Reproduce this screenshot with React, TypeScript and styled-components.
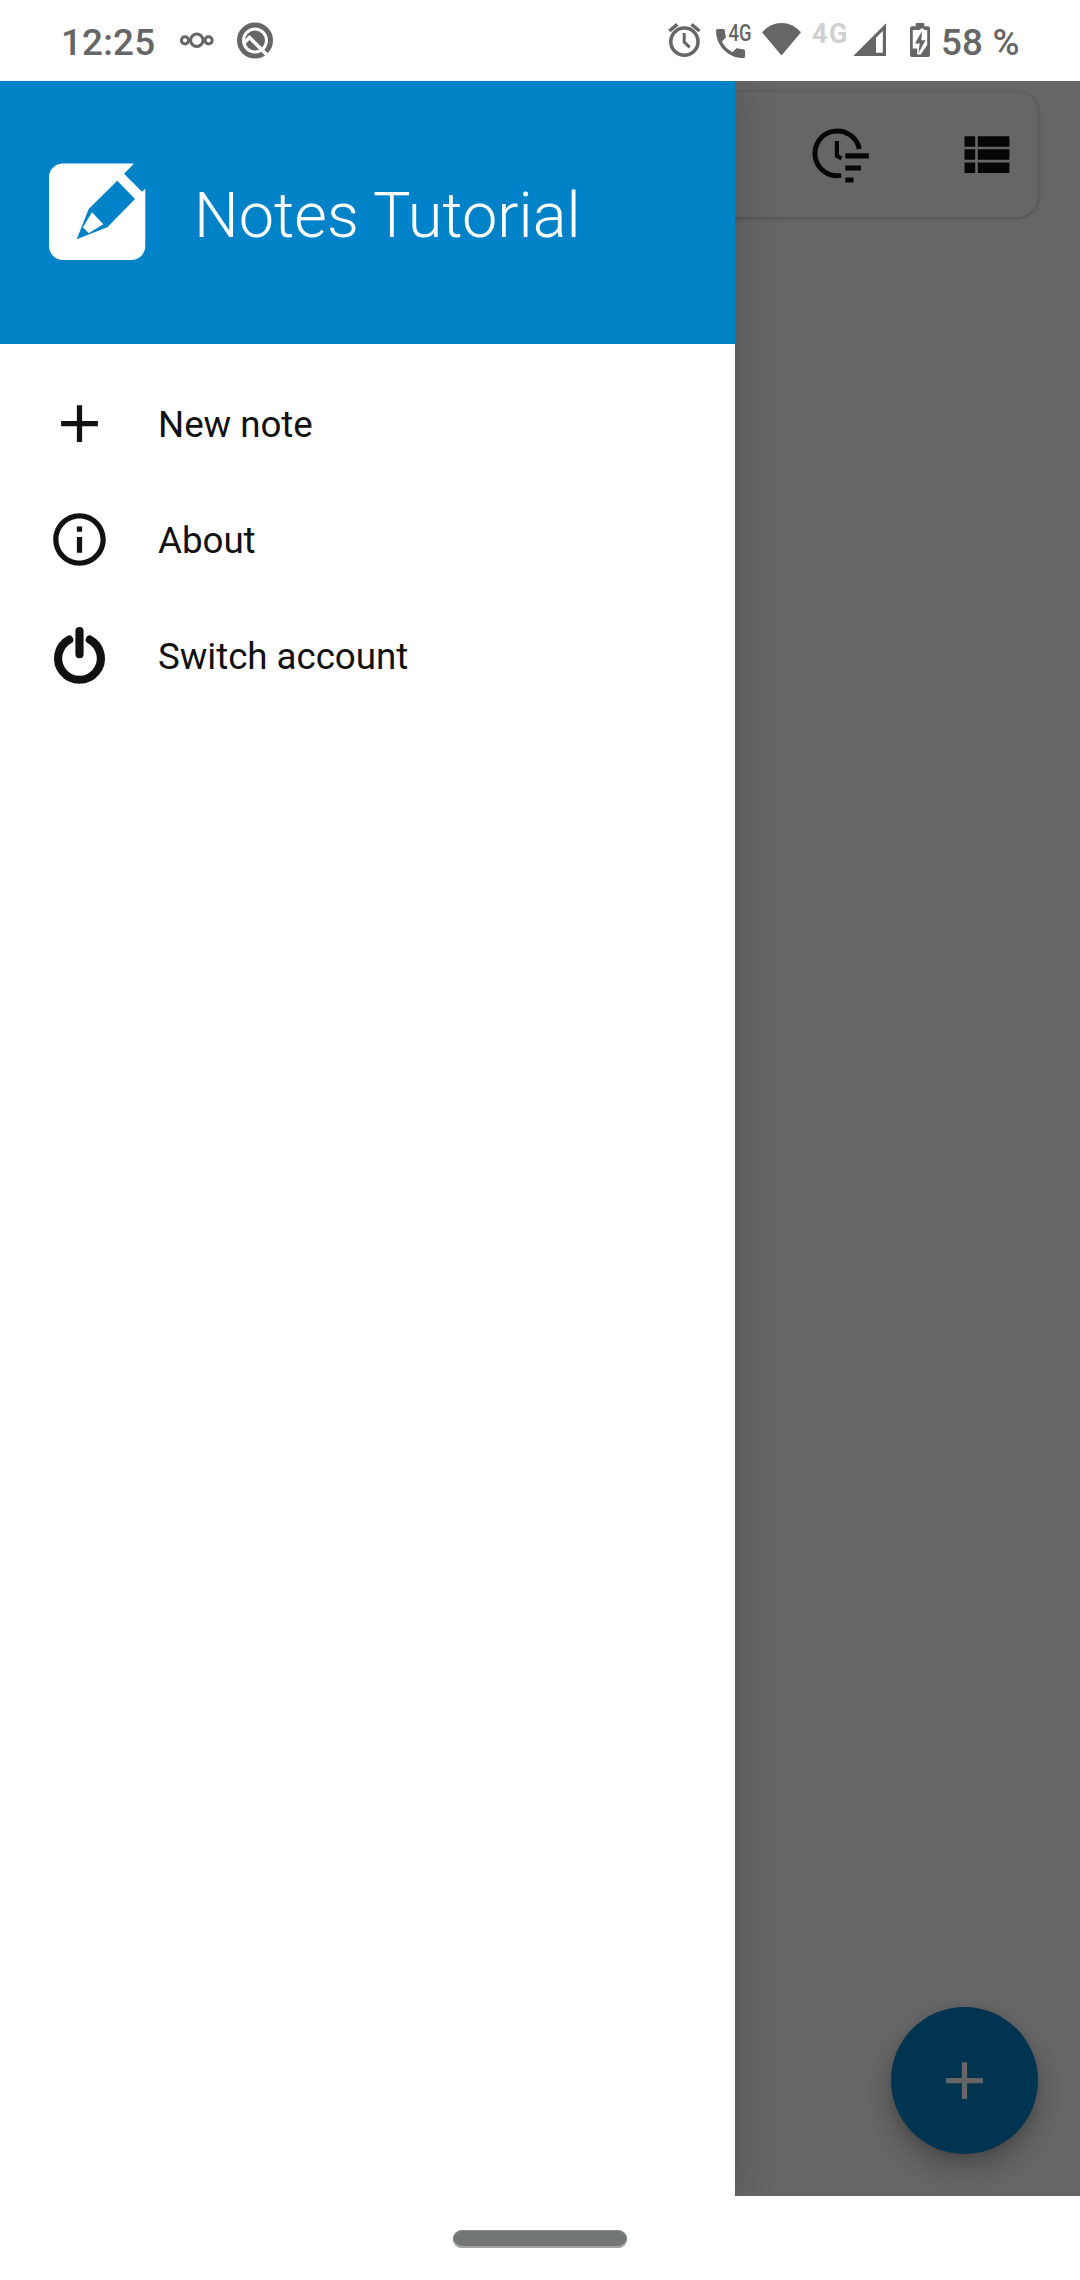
import React from "react";
import styled, { createGlobalStyle } from "styled-components";

const GlobalStyle = createGlobalStyle`
  body { margin: 0; background: #fff; font-family: Roboto, "Liberation Sans", sans-serif; }
`;

const Screen = styled.div`
  width: 1080px;
  height: 2280px;
  display: flex;
  flex-direction: column;
  background: #fff;
  overflow: hidden;
`;

const StatusBar = styled.header`
  height: 81px;
  flex: none;
  display: flex;
  color: #666;
  fill: #666;
`;

const StatusText = styled.span<{ $width: number; $before?: number }>`
  width: ${(p) => p.$width}px;
  margin-left: ${(p) => p.$before ?? 0}px;
  font-size: 36.75px;
  font-weight: 500;
  line-height: 85px;
  letter-spacing: 0.2px;
  white-space: nowrap;
`;

const StatusIcon = styled.svg<{ $before?: number }>`
  display: block;
  flex: none;
  overflow: visible;
  margin-left: ${(p) => p.$before ?? 0}px;
`;

const NetworkLabel = styled.span`
  width: 38px;
  margin-left: 10px;
  font-size: 27px;
  font-weight: 700;
  letter-spacing: 1.5px;
  line-height: 68px;
  color: #d0d0d0;
`;

const Stage = styled.main`
  height: 2115px;
  flex: none;
  display: grid;
  grid-template-columns: 735px 345px;
  overflow: hidden;
`;

const Page = styled.section`
  grid-area: 1 / 1 / 2 / 3;
  display: flex;
  flex-direction: column;
  justify-content: space-between;
  align-items: flex-end;
  padding: 11px 42px 42px;
  box-sizing: border-box;
  background: #fff;
`;

const SearchCard = styled.div`
  width: 996px;
  height: 125px;
  box-sizing: border-box;
  padding-right: 20px;
  border-radius: 21px;
  display: flex;
  gap: 83px;
  justify-content: flex-end;
  align-items: center;
  background: #fff;
  box-shadow: 0 1px 5px rgba(0, 0, 0, 0.26);
`;

const ToolButton = styled.button`
  width: 63px;
  height: 125px;
  padding: 0;
  border: 0;
  background: none;
  display: flex;
  justify-content: center;
`;

const Fab = styled.button`
  width: 147px;
  height: 147px;
  padding: 0;
  border: 0;
  border-radius: 50%;
  display: flex;
  align-items: center;
  justify-content: center;
  background: #0082c9;
  box-shadow: 0 14px 28px rgba(0, 0, 0, 0.27), 0 2px 10px rgba(0, 0, 0, 0.1);
`;

const Scrim = styled.div`
  grid-area: 1 / 1 / 2 / 3;
  z-index: 1;
  background: rgba(0, 0, 0, 0.6);
`;

const Drawer = styled.nav`
  grid-area: 1 / 1 / 2 / 2;
  z-index: 2;
  background: #fff;
  box-shadow: 0 0 40px rgba(0, 0, 0, 0.2);
`;

const DrawerHeader = styled.div`
  height: 263px;
  box-sizing: border-box;
  padding: 82px 0 0 48px;
  display: flex;
  background: #0082c9;
`;

const Title = styled.h1`
  margin: 16px 0 0 48px;
  font-size: 63px;
  font-weight: 300;
  line-height: 74px;
  white-space: nowrap;
  color: #fff;
`;

const Menu = styled.ul`
  list-style: none;
  margin: 0;
  padding: 21px 0 0;
`;

const MenuItem = styled.li`
  height: 116px;
  padding-left: 48px;
  display: flex;
  align-items: center;
`;

const MenuLabel = styled.span`
  margin: 3px 0 0 47px;
  font-size: 36.75px;
  line-height: 44px;
  letter-spacing: -0.06px;
  color: #111;
`;

const NavBar = styled.footer`
  height: 84px;
  flex: none;
  display: flex;
  justify-content: center;
  padding-top: 34px;
  box-sizing: border-box;
`;

const HomeHandle = styled.div`
  width: 174px;
  height: 18px;
  border-radius: 9px;
  background: #727676;
  box-shadow: inset 0 -2px 0 #a3a5a5, inset 0 1px 0 #8a8e8e;
`;

const PlusIcon = ({ color }: { color: string }) => (
  <svg width="63" height="63" viewBox="0 0 24 24" fill={color}>
    <path d="M19 13h-6v6h-2v-6H5v-2h6V5h2v6h6v2z" />
  </svg>
);

const InfoIcon = () => (
  <svg width="63" height="63" viewBox="0 0 24 24" fill="#111">
    <path d="M11 7h2v2h-2zm0 4h2v6h-2zm1-9C6.48 2 2 6.48 2 12s4.48 10 10 10 10-4.48 10-10S17.52 2 12 2zm0 18c-4.41 0-8-3.59-8-8s3.59-8 8-8 8 3.59 8 8-3.59 8-8 8z" />
  </svg>
);

const PowerIcon = () => (
  <svg width="63" height="63" viewBox="48 624 63 63" fill="none" stroke="#111" strokeWidth="8.2" strokeLinecap="round">
    <path d="M79.5 631.2v23M69.2 639.6a21.4 21.4 0 1 0 20.6 0" />
  </svg>
);

const NotesLogo = () => (
  <svg width="98" height="98" viewBox="48 163 98 98">
    <path
      fill="#fff"
      d="M63 163.5H134L124 173.7L142 191.7L145.3 188.7V246a14 14 0 0 1-14 14H63a14 14 0 0 1-14-14V177.5a14 14 0 0 1 14-14z"
    />
    <path fill="#0082c9" d="M117.3 180.7L135 199L107.3 227.3L76.7 239.3L88.7 209z" />
    <path fill="#fff" d="M92 212.3L103.3 224.3L88.7 233.3L83 227.3z" />
  </svg>
);

const App = () => (
  <>
    <GlobalStyle />
    <Screen>
      <StatusBar>
        <StatusText $width={100} $before={61}>12:25</StatusText>
        <StatusIcon $before={17} width="40" height="81" viewBox="178 0 40 81">
          <g fill="none" stroke="#666" strokeWidth="3">
            <circle cx="196.8" cy="40.3" r="6.2" />
            <circle cx="185" cy="40.3" r="3.6" />
            <circle cx="208.6" cy="40.3" r="3.6" />
          </g>
        </StatusIcon>
        <StatusIcon $before={16} width="42" height="81" viewBox="234 0 42 81">
          <circle cx="255" cy="40.5" r="15.5" fill="none" stroke="#666" strokeWidth="5" />
          <circle cx="255" cy="40.5" r="10" />
          <path d="M243.5 43.5L249.5 37.5L270 58" fill="none" stroke="#fff" strokeWidth="3.6" />
        </StatusIcon>
        <StatusIcon $before={390} width="38" height="81" viewBox="666 0 38 81">
          <g fill="none" stroke="#666">
            <circle cx="684.4" cy="41.7" r="13.6" strokeWidth="3.5" />
            <path d="M684.2 33v9l5.500 5.300" strokeWidth="3" />
            <path d="M669.3 31l8-6.600M699.500 31l-8-6.600" strokeWidth="3.4" />
          </g>
        </StatusIcon>
        <StatusIcon $before={10} width="46" height="81" viewBox="714 0 46 81">
          <path
            transform="translate(711.2 24.2) scale(1.61)"
            d="M6.62 10.79c1.44 2.83 3.76 5.14 6.59 6.59l2.2-2.2c.27-.27.67-.36 1.02-.24 1.12.37 2.33.57 3.57.57.55 0 1 .45 1 1V20c0 .55-.45 1-1 1-9.39 0-17-7.61-17-17 0-.55.45-1 1-1h3.500c.55 0 1 .45 1 1 0 1.25.2 2.45.57 3.57.11.35.03.74-.25 1.02l-2.200 2.200z"
          />
          <text x="728.6" y="40.5" fontSize="23" fontWeight="500" textLength="23" lengthAdjust="spacingAndGlyphs">4G</text>
        </StatusIcon>
        <StatusIcon $before={1} width="41" height="81" viewBox="761 0 41 81">
          <path d="M762 32.200Q770.500 23 781.500 23T801 32.200L781.500 55.500z" />
        </StatusIcon>
        <NetworkLabel>4G</NetworkLabel>
        <StatusIcon $before={2} width="36" height="81" viewBox="852 0 36 81">
          <path fillRule="evenodd" d="M853.300 56L886 23.300V56zM876 37.800V52.800H882.800V31z" />
        </StatusIcon>
        <StatusIcon $before={20} width="24" height="81" viewBox="908 0 24 81">
          <path d="M915.700 23h8.600v3.300h3.700q2 0 2 2V55q0 2-2 2h-16q-2 0-2-2V28.300q0-2 2-2h3.700z" />
          <path fill="#fff" d="M912.800 30h6.500l2-1.500h2.400l0 1.500h3.500v15l-6.500 9.500h-3.500v-6h-4.400z" />
          <path d="M922 31l-7 12.500h4.700L918.500 53l7-12.700h-4.200z" />
        </StatusIcon>
        <StatusText $width={100} $before={9}>58 %</StatusText>
      </StatusBar>

      <Stage>
        <Page>
          <SearchCard>
            <ToolButton>
              <svg width="63" height="125" viewBox="809 92 63 125">
                <g fill="none" stroke="#111" strokeWidth="5">
                  <path d="M859.300 149A22.400 22.400 0 1 0 841.200 175.400" />
                  <path d="M836.900 141v14.700l4.600 2.800" strokeWidth="4.2" />
                </g>
                <path fill="#111" d="M845.300 153.300h23.600v5.300h-23.600zM845.300 165.400h15.700v5.200h-15.700zM845.300 177.500h8.200v5.100h-8.200z" />
              </svg>
            </ToolButton>
            <ToolButton>
              <svg width="63" height="125" viewBox="955 92 63 125" fill="#111">
                <path d="M964.500 136.300h10.700v10.500h-10.700zM964.500 149.300h10.700v10.500h-10.700zM964.500 162.500h10.700v10.500h-10.700zM977.800 136.300h31.600v10.500h-31.600zM977.800 149.300h31.600v10.500h-31.600zM977.800 162.500h31.600v10.500h-31.600z" />
              </svg>
            </ToolButton>
          </SearchCard>
          <Fab>
            <PlusIcon color="#fff" />
          </Fab>
        </Page>
        <Scrim />
        <Drawer>
          <DrawerHeader>
            <NotesLogo />
            <Title>Notes Tutorial</Title>
          </DrawerHeader>
          <Menu>
            <MenuItem>
              <PlusIcon color="#111" />
              <MenuLabel>New note</MenuLabel>
            </MenuItem>
            <MenuItem>
              <InfoIcon />
              <MenuLabel>About</MenuLabel>
            </MenuItem>
            <MenuItem>
              <PowerIcon />
              <MenuLabel>Switch account</MenuLabel>
            </MenuItem>
          </Menu>
        </Drawer>
      </Stage>

      <NavBar>
        <HomeHandle />
      </NavBar>
    </Screen>
  </>
);

export default App;
